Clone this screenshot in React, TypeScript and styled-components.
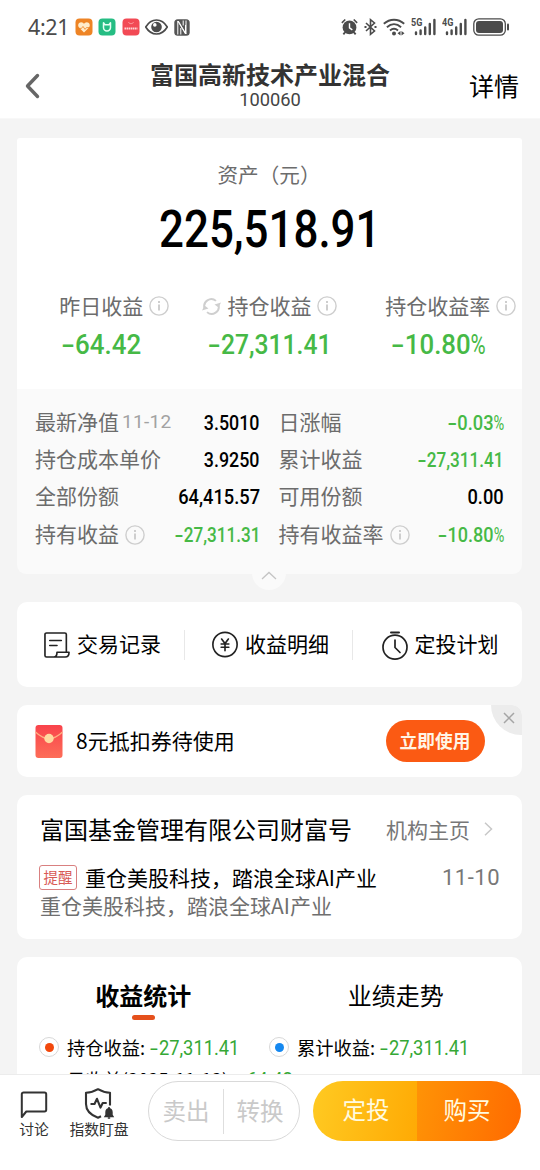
import React from "react";
import styled, { createGlobalStyle, css } from "styled-components";

const GlobalStyle = createGlobalStyle`
  * { box-sizing: border-box; }
  body {
    margin: 0;
    background: #f4f4f4;
    font-family: "Noto Sans CJK SC", sans-serif;
    color: #000;
  }
`;

const GREEN = "#46b946";

const Screen = styled.div`
  width: 540px;
  height: 1170px;
  display: flex;
  flex-direction: column;
  overflow: hidden;
  background: #f4f4f4;
  white-space: nowrap;
`;

/* ---------- status bar ---------- */

const StatusBar = styled.div`
  height: 54px;
  flex: none;
  display: flex;
  align-items: center;
  justify-content: space-between;
  padding: 0 30px 0 28px;
  background: #fff;
  color: #4b4b4b;
`;

const StatusGroup = styled.div<{ $gap: number }>`
  display: flex;
  align-items: center;
  gap: ${(p) => p.$gap}px;
`;

const Clock = styled.span`
  width: 41px;
  font: 400 21.5px/26px "Noto Sans", sans-serif;
  letter-spacing: -0.4px;
`;

/* ---------- header ---------- */

const Header = styled.header`
  height: 65px;
  flex: none;
  display: grid;
  grid-template-columns: 110px 1fr 110px;
  background: #fff;
  border-bottom: 1px solid #f8f8f8;
`;

const BackButton = styled.div`
  padding: 18px 0 0 25px;
`;

const HeaderTitle = styled.div`
  display: flex;
  flex-direction: column;
  align-items: center;
`;

const FundName = styled.h1`
  margin: 6px 0 0;
  font-size: 24px;
  line-height: 27px;
  font-weight: 700;
  color: #333;
`;

const FundCode = styled.div`
  margin-top: 3px;
  font: 400 18.3px/20px Roboto, sans-serif;
  color: #444;
`;

const DetailLink = styled.div`
  padding: 15px 21px 0 0;
  text-align: right;
  font-size: 25px;
  line-height: 33px;
`;

/* ---------- shared ---------- */

const Content = styled.main`
  flex: 1;
  min-height: 0;
  overflow: hidden;
  padding: 19px 18px 0 17px;
`;

const Card = styled.section<{ $h: number; $mt?: number }>`
  height: ${(p) => p.$h}px;
  margin-top: ${(p) => p.$mt ?? 18}px;
  background: #fff;
  border-radius: 10px;
`;

type Origin = "left" | "center" | "right";

const NumBox = styled.span<{ $size: number; $k: number; $o: Origin; $color: string; $w: number }>`
  display: inline-block;
  font-family: Roboto, sans-serif;
  font-size: ${(p) => p.$size}px;
  line-height: 1.2;
  font-weight: ${(p) => p.$w};
  color: ${(p) => p.$color};
  transform: scaleX(${(p) => p.$k});
  transform-origin: ${(p) => p.$o} center;
`;

const Minus = styled.span`
  display: inline-block;
  width: 0.54em;
  text-align: center;
  transform: scaleX(1.55);
`;

const Percent = styled.span`
  display: inline-block;
  width: 0.57em;
  font-weight: 400;
  transform: scaleX(0.8);
  transform-origin: left center;
`;

function Num({
  children,
  size,
  k = 0.87,
  origin = "center",
  color = "#000",
  weight = 500,
}: {
  children: string;
  size: number;
  k?: number;
  origin?: Origin;
  color?: string;
  weight?: number;
}) {
  const negative = children.startsWith("-");
  const percent = children.endsWith("%");
  const digits = children.replace(/^-|%$/g, "");
  return (
    <NumBox $size={size} $k={k} $o={origin} $color={color} $w={weight}>
      {negative && <Minus>-</Minus>}
      {digits}
      {percent && <Percent>%</Percent>}
    </NumBox>
  );
}

const InfoIcon = () => (
  <svg width="20" height="20" viewBox="0 0 20 20" fill="none" stroke="#cecece">
    <circle cx="10" cy="10" r="9.1" strokeWidth="1.4" />
    <path d="M10 8.4v6.2" strokeWidth="2" />
    <path d="M10 5v2" strokeWidth="2" />
  </svg>
);

/* ---------- asset card ---------- */

const AssetTop = styled.section`
  height: 251px;
  background: #fff;
  border-radius: 3px 3px 0 0;
  display: flex;
  flex-direction: column;
`;

const AssetLabel = styled.div`
  margin-top: 21px;
  padding-right: 1px;
  text-align: center;
  font-size: 20.6px;
  line-height: 30px;
  color: #6c6c6c;
`;

const AssetValue = styled.div`
  height: 62px;
  margin-top: 10px;
  text-align: center;
`;

const StatGrid = styled.div`
  display: grid;
  grid-template-columns: repeat(3, 1fr);
  margin-top: 29px;
`;

const StatLabel = styled.div`
  display: grid;
  grid-template-columns: 1fr auto 1fr;
  align-items: center;
  column-gap: 6px;
  font-size: 21px;
  line-height: 30px;
  color: #6c6c6c;
  svg { display: block; margin-top: 2px; }
`;

const StatLead = styled.span`
  display: flex;
  justify-content: flex-end;
`;

const StatValue = styled.div`
  margin-top: 8px;
  text-align: center;
`;

const DetailPanel = styled.section`
  height: 185px;
  padding: 14px 18px 0;
  background: #fafafa;
  border-radius: 0 0 9px 9px;
  display: grid;
  grid-template-columns: 225px 225px;
  grid-auto-rows: 37.4px;
  column-gap: 18.5px;
  position: relative;
`;

const DetailRow = styled.div`
  display: flex;
  align-items: center;
  justify-content: space-between;
  & > ${NumBox} { margin-top: 3px; }
`;

const DetailLabel = styled.div`
  display: flex;
  align-items: center;
  gap: 6px;
  padding-bottom: 2px;
  font-size: 21px;
  line-height: 30px;
  color: #6c6c6c;
  svg { margin-top: 4px; }
`;

const DetailDate = styled.span`
  margin-left: -3px;
  padding-top: 2px;
  font: 400 19px/28px Roboto, sans-serif;
  letter-spacing: 0.3px;
  color: #a2a2a2;
`;

const CollapseTab = styled.div`
  position: absolute;
  left: 235px;
  bottom: -16px;
  width: 34px;
  height: 34px;
  padding-top: 5px;
  border-radius: 50%;
  background: #fafafa;
  display: flex;
  align-items: center;
  justify-content: center;
`;

/* ---------- shortcuts ---------- */

const ShortcutGrid = styled.div`
  height: 100%;
  display: grid;
  grid-template-columns: 168px 168px 169px;
  align-items: center;
`;

const Shortcut = styled.div<{ $divided?: boolean }>`
  height: 30px;
  display: flex;
  align-items: center;
  justify-content: center;
  gap: 7px;
  padding-left: ${(p) => (p.$divided ? 4 : 5)}px;
  font-size: 21px;
  line-height: 30px;
  ${(p) => p.$divided && css`border-right: 1px solid #e8e8e8;`}
`;

const ShortcutText = styled.span`
  padding-bottom: 3px;
`;

/* ---------- coupon ---------- */

const CouponBody = styled.div`
  height: 100%;
  display: flex;
  align-items: center;
  padding-left: 18px;
  position: relative;
  overflow: hidden;
  border-radius: 10px;
`;

const CouponText = styled.div`
  margin-left: 13px;
  width: 309.5px;
  padding-bottom: 3px;
  font-size: 21px;
  line-height: 30px;
`;

const UseButton = styled.div`
  width: 99px;
  height: 42px;
  border-radius: 21px;
  background: #fb5a13;
  color: #fff5e6;
  font-size: 17.7px;
  font-weight: 700;
  line-height: 40px;
  text-align: center;
`;

const CloseCorner = styled.div`
  position: absolute;
  top: 0;
  right: 0;
  width: 31px;
  height: 30px;
  border-bottom-left-radius: 30px;
  background: #ececec;
  padding: 7px 0 0 12px;
  svg { display: block; }
`;

/* ---------- company account ---------- */

const Line = styled.div<{ $mt: number }>`
  margin-top: ${(p) => p.$mt}px;
  display: flex;
  align-items: center;
`;

const AccountTitle = styled.div`
  font-size: 24px;
  line-height: 34px;
  flex: 1;
`;

const AccountLink = styled.div`
  display: flex;
  align-items: center;
  gap: 14px;
  font-size: 21px;
  line-height: 30px;
  color: #777;
`;

const AccountCard = styled(Card)`
  padding: 0 22px 0 23px;
  overflow: hidden;
`;

const Tag = styled.span`
  width: 38px;
  height: 25px;
  margin: 0 8px 0 -1px;
  border: 1px solid #d98080;
  border-radius: 3px;
  font-size: 14.5px;
  line-height: 21px;
  text-align: center;
  color: #d85a55;
`;

const PostTitle = styled.div`
  flex: 1;
  font-size: 21px;
  line-height: 28px;
`;

const PostDate = styled.div`
  padding-top: 2px;
  font: 400 22px/26px Roboto, sans-serif;
  letter-spacing: 0.5px;
  color: #777;
`;

const PostSummary = styled.div`
  font-size: 21px;
  line-height: 28px;
  color: #6f6f6f;
`;

/* ---------- income statistics ---------- */

const StatsCard = styled(Card)`
  border-radius: 10px 10px 0 0;
`;

const Tabs = styled.div`
  display: grid;
  grid-template-columns: 1fr 1fr;
  padding-top: 21px;
`;

const Tab = styled.div<{ $active?: boolean }>`
  display: flex;
  flex-direction: column;
  align-items: center;
  font-size: 24px;
  line-height: 34px;
  font-weight: ${(p) => (p.$active ? 700 : 400)};
  &::after {
    content: "";
    width: 23px;
    height: 5px;
    margin-top: 3px;
    border-radius: 3px;
    background: ${(p) => (p.$active ? "#e5501c" : "transparent")};
  }
`;

const Legend = styled.div`
  display: grid;
  grid-template-columns: 230px 1fr;
  margin-top: 13.5px;
  padding-left: 22px;
`;

const LegendItem = styled.div`
  display: flex;
  align-items: center;
  font-size: 18.3px;
  line-height: 27px;
`;

const Radio = styled.span<{ $color: string }>`
  width: 20px;
  height: 20px;
  margin-right: 8px;
  border: 1px solid #d8d8d8;
  border-radius: 50%;
  display: flex;
  align-items: center;
  justify-content: center;
  &::before {
    content: "";
    width: 9px;
    height: 9px;
    border-radius: 50%;
    background: ${(p) => p.$color};
  }
`;

const LegendValue = styled.span`
  margin-left: 4px;
`;

const DayIncome = styled.div`
  display: flex;
  align-items: center;
  padding: 5px 0 0 50px;
  font-size: 18.3px;
  line-height: 27px;
`;

/* ---------- bottom bar ---------- */

const BottomBar = styled.footer`
  height: 96px;
  flex: none;
  display: flex;
  padding: 6px 18px 0 17px;
  background: #fff;
  border-top: 1px solid #ececec;
`;

const BarItem = styled.div<{ $w: number; $ml: number }>`
  width: ${(p) => p.$w}px;
  margin-left: ${(p) => p.$ml}px;
  padding-top: 7px;
  display: flex;
  flex-direction: column;
  align-items: center;
  font-size: 14.8px;
  line-height: 20px;
  color: #333;
  svg { display: block; flex: none; }
`;

const GhostPill = styled.div`
  width: 152px;
  height: 60px;
  margin-left: 19px;
  display: grid;
  grid-template-columns: 1fr 1fr;
  align-items: center;
  border: 1px solid #d9d9d9;
  border-radius: 30px;
`;

const GhostAction = styled.div<{ $first?: boolean }>`
  height: 45px;
  padding-right: ${(p) => (p.$first ? 0 : 3)}px;
  border-right: ${(p) => (p.$first ? "1px solid #dedede" : "0")};
  text-align: center;
  font-size: 23.5px;
  line-height: 42px;
  color: #c9c9c9;
`;

const SolidPill = styled.div`
  width: 208px;
  height: 60px;
  margin-left: 13px;
  display: grid;
  grid-template-columns: 1fr 1fr;
  border-radius: 30px;
  overflow: hidden;
`;

const SolidAction = styled.div<{ $from: string; $to: string; $shift: number }>`
  padding-left: ${(p) => Math.max(p.$shift, 0)}px;
  padding-right: ${(p) => Math.max(-p.$shift, 0)}px;
  background: linear-gradient(100deg, ${(p) => p.$from}, ${(p) => p.$to});
  color: #fffbe0;
  text-align: center;
  font-size: 23.5px;
  line-height: 57px;
`;

/* ---------- status icons ---------- */

const HeartApp = () => (
  <svg width="18" height="18" viewBox="0 0 18 18">
    <rect x=".5" y=".5" width="17" height="17" rx="4" fill="#ee8425" />
    <path d="M9 14.5 4 9.4C2.2 7.2 3.7 4.3 6.1 4.3 7.5 4.3 8.5 5 9 6c.5-1 1.5-1.7 2.9-1.7 2.4 0 3.9 2.9 2.1 5.1z" fill="#ffeccb" />
    <path d="M2 10.4h4.5l1.5-2 2 3 1.4-1.8H16" stroke="#ee8425" fill="none" strokeWidth=".8" />
  </svg>
);

const MiApp = () => (
  <svg width="18" height="18" viewBox="0 0 18 18">
    <rect x=".5" y=".5" width="17" height="17" rx="4" fill="#25bd83" />
    <path d="M5.5 4.8v4.7a3.5 3.5 0 0 0 7 0V4.8L11 6.7H7z" fill="none" stroke="#e4fff2" strokeWidth="1.5" strokeLinejoin="round" />
  </svg>
);

const RedApp = () => (
  <svg width="18" height="18" viewBox="0 0 18 18">
    <rect x=".5" y=".5" width="17" height="17" rx="4" fill="#f24a55" />
    <path d="M6.5 4c.5 2.2 4.5 2.2 5 0" fill="none" stroke="#ffb1b1" strokeWidth=".8" />
    <path d="M2.5 10.5h13" stroke="#ffd6d6" strokeWidth="1.8" strokeDasharray="1.6 .5" />
  </svg>
);

const EyeIcon = () => (
  <svg width="23" height="18" viewBox="0.5 0 23 18">
    <path d="M1.2 9C4 4.3 7.7 2 12 2s8 2.3 10.8 7C20 13.7 16.3 16 12 16S4 13.7 1.2 9z" fill="none" stroke="#4b4b4b" strokeWidth="1.7" />
    <circle cx="12" cy="9" r="5.3" fill="#4b4b4b" />
    <circle cx="10.3" cy="6.9" r="1.8" fill="#fff" />
  </svg>
);

const NfcIcon = () => (
  <svg width="16" height="17" viewBox="0 0 16 17">
    <rect x=".3" y=".3" width="15.4" height="16.4" rx="3.5" fill="#555" />
    <path d="M3.8 15.5V2l7.7 13V6M4.3 2l7.7 13V1.5M6.8 15.5V9M9.2 1.5v5" stroke="#fff" strokeWidth="1" fill="none" />
  </svg>
);

const AlarmIcon = () => (
  <svg width="17" height="18" viewBox="0 0 18 18" fill="none" stroke="#4b4b4b">
    <circle cx="9" cy="9.5" r="7.3" fill="#4b4b4b" stroke="none" />
    <path d="M9 5v5l3 2" stroke="#fff" strokeWidth="1.5" />
    <path d="M.9 4.6 4.5 1M17.1 4.6 13.5 1" strokeWidth="1.7" />
    <path d="m4.2 14.8-1.7 2M13.8 14.8l1.7 2" strokeWidth="2" />
  </svg>
);

const BluetoothIcon = () => (
  <svg width="13" height="18" viewBox="0 0 13 18" fill="none" stroke="#4b4b4b" strokeWidth="1.6">
    <path d="m2 5 8.5 8L6.5 16.300V1.700l4 3.300L2 13" />
    <path d="M.5 9h2M10.500 9h2" strokeWidth="2" />
  </svg>
);

const WifiIcon = () => (
  <svg width="22" height="18" viewBox="0 0 22 18" fill="none" stroke="#4b4b4b" strokeWidth="1.9">
    <path d="M.8 5.8c6-5.4 14.4-5.4 20.4 0M3.9 9.2c4.4-3.9 9.8-3.9 14.2 0M7 12.5c2.5-2.1 5.5-2.1 8 0" />
    <circle cx="11" cy="15.5" r="2" fill="#4b4b4b" stroke="none" />
    <path d="m17.5 13-3 2.3 3 2.3zM18.5 13l3 2.3-3 2.3z" fill="#4b4b4b" stroke="none" />
  </svg>
);

const SignalBox = styled.div`
  width: 25px;
  height: 18px;
  position: relative;
  svg { display: block; }
`;

const NetworkType = styled.span`
  position: absolute;
  left: 0;
  top: -1px;
  font: 700 11px/12px Roboto, sans-serif;
  transform: scaleX(0.82);
  transform-origin: left center;
`;

const Signal = ({ label }: { label: string }) => (
  <SignalBox>
    <NetworkType>{label}</NetworkType>
    <svg width="25" height="18" viewBox="0 0 25 18" stroke="#4b4b4b" strokeWidth="2.4" strokeLinecap="round">
      <path d="M5 14.5v1.5M9.6 12.5v3.5M14.2 9.5v6.5M18.8 6v10M23.4 2v14" />
    </svg>
  </SignalBox>
);

const BatteryIcon = () => (
  <svg width="37" height="18" viewBox="0 0 37 18">
    <rect x=".8" y=".8" width="31.5" height="16.4" rx="5" fill="none" stroke="#4b4b4b" strokeWidth="1.3" />
    <rect x="3" y="3" width="27" height="12" rx="3" fill="#4b4b4b" />
    <path d="M35 6.5v5" stroke="#4b4b4b" strokeWidth="2" strokeLinecap="round" />
  </svg>
);

/* ---------- page icons ---------- */

const RefreshIcon = () => (
  <svg width="19" height="19" viewBox="0 0 19 19" fill="none" stroke="#cfcfcf" strokeWidth="1.9">
    <path d="M2.6 11.5A7.1 7.1 0 0 1 14 3.9M16.4 7.5A7.1 7.1 0 0 1 5 15.1" />
    <path d="m12.5 7.5 6.5-2-2.5 5zM6.5 11.5l-6.5 2 2.5-5z" fill="#cfcfcf" stroke="none" />
  </svg>
);

const RecordIcon = () => (
  <svg width="26" height="26" viewBox="0 0 27 27" fill="none" stroke="#222" strokeWidth="1.7" strokeLinejoin="round" strokeLinecap="round">
    <path d="M23.2 20V2.6a1.6 1.6 0 0 0-1.6-1.6H2.6A1.6 1.6 0 0 0 1 2.6v21.8A1.6 1.6 0 0 0 2.6 26H22c2.7 0 4-2 4-5H13.5c0 3-1.5 5-3.5 5" />
    <path d="M6 8.8h12M6 14h7.500" />
  </svg>
);

const YuanIcon = () => (
  <svg width="26" height="27" viewBox="0 0 27 27" fill="none" stroke="#222" strokeWidth="1.7" strokeLinecap="round">
    <circle cx="13.5" cy="13.5" r="12.6" />
    <path d="m10 7.8 3.5 4.7L17 7.8M13.5 12.5V20M9.5 13h8M9.5 16.3h8" />
  </svg>
);

const TimerIcon = () => (
  <svg width="26" height="32" viewBox="0 0 26 32" fill="none" stroke="#222" strokeWidth="1.7" strokeLinecap="round">
    <circle cx="13" cy="18.2" r="12" />
    <path d="M9 3.5h8" strokeWidth="2" />
    <path d="M13 11v7.500l5 5" />
  </svg>
);

const EnvelopeIcon = () => (
  <svg width="28" height="33" viewBox="0 0 28 33">
    <defs>
      <linearGradient id="envelope" x1="0" y1="0" x2="0" y2="1">
        <stop offset="0" stopColor="#f9434b" />
        <stop offset="1" stopColor="#fd6d58" />
      </linearGradient>
    </defs>
    <rect x=".5" width="27" height="33" rx="3" fill="url(#envelope)" />
    <path d="M.5 7Q14 20 27.5 7" fill="none" stroke="#ffb183" strokeWidth="1.2" />
    <circle cx="14" cy="13.5" r="4.7" fill="#ffd9a0" />
  </svg>
);

const ChatIcon = () => (
  <svg width="28" height="31" viewBox="0 0 28 31" fill="none" stroke="#333" strokeWidth="2" strokeLinejoin="round">
    <path d="M1.8 29V6.2a1.7 1.7 0 0 1 1.7-1.7h21a1.7 1.7 0 0 1 1.7 1.7v15.6a1.7 1.7 0 0 1-1.7 1.7H6.3z" />
  </svg>
);

const ShieldIcon = () => (
  <svg width="31" height="31" viewBox="0 0 31 31" fill="none" stroke="#333" strokeWidth="2.1" strokeLinejoin="round">
    <path d="M26 17.5V4.7C21.5 4.7 17.5 3.3 14 1.2 10.5 3.3 6.5 4.7 2 4.7V16c0 6.5 4.5 11 12 13.7l3-1.4" />
    <path d="M6.5 16h4l2.5-5.2 3.5 8.8 2.2-4.600h4" />
    <path d="M19.8 29.2h10.4l-1.500-2.400V24c0-5.500-7.400-5.500-7.400 0v2.800z" fill="#333" stroke="none" />
    <path d="M23.8 30h2.4M25 19v3" strokeWidth="1.6" />
  </svg>
);

/* ---------- data ---------- */

type Detail = { label: string; date?: string; info?: boolean; value: string; k?: number };

const details: Detail[] = [
  { label: "最新净值", date: "11-12", value: "3.5010", k: 0.85 },
  { label: "日涨幅", value: "-0.03%" },
  { label: "持仓成本单价", value: "3.9250", k: 0.85 },
  { label: "累计收益", value: "-27,311.41", k: 0.815 },
  { label: "全部份额", value: "64,415.57" },
  { label: "可用份额", value: "0.00" },
  { label: "持有收益", info: true, value: "-27,311.31", k: 0.815 },
  { label: "持有收益率", info: true, value: "-10.80%", k: 0.86 },
];

const stats = [
  { label: "昨日收益", value: "-64.42", k: 0.91 },
  { label: "持仓收益", value: "-27,311.41", k: 0.865, refresh: true },
  { label: "持仓收益率", value: "-10.80%", k: 0.905 },
];

export default function App() {
  return (
    <Screen>
      <GlobalStyle />
      <StatusBar>
        <StatusGroup $gap={5.5}>
          <Clock>4:21</Clock>
          <HeartApp />
          <MiApp />
          <RedApp />
          <EyeIcon />
          <NfcIcon />
        </StatusGroup>
        <StatusGroup $gap={6}>
          <AlarmIcon />
          <BluetoothIcon />
          <WifiIcon />
          <Signal label="5G" />
          <Signal label="4G" />
          <BatteryIcon />
        </StatusGroup>
      </StatusBar>

      <Header>
        <BackButton>
          <svg width="16" height="28" viewBox="0 0 16 28" fill="none" stroke="#666" strokeWidth="3.4" strokeLinecap="round" strokeLinejoin="round">
            <path d="M12.5 3.5 2.5 14l10 10.5" />
          </svg>
        </BackButton>
        <HeaderTitle>
          <FundName>富国高新技术产业混合</FundName>
          <FundCode>100060</FundCode>
        </HeaderTitle>
        <DetailLink>详情</DetailLink>
      </Header>

      <Content>
        <AssetTop>
          <AssetLabel>资产（元）</AssetLabel>
          <AssetValue>
            <Num size={51} k={0.86}>225,518.91</Num>
          </AssetValue>
          <StatGrid>
            {stats.map((s) => (
              <div key={s.label}>
                <StatLabel>
                  <StatLead>{s.refresh && <RefreshIcon />}</StatLead>
                  {s.label}
                  <InfoIcon />
                </StatLabel>
                <StatValue>
                  <Num size={28.5} k={s.k} color={GREEN}>{s.value}</Num>
                </StatValue>
              </div>
            ))}
          </StatGrid>
        </AssetTop>
        <DetailPanel>
          {details.map((d) => (
            <DetailRow key={d.label}>
              <DetailLabel>
                {d.label}
                {d.date && <DetailDate>{d.date}</DetailDate>}
                {d.info && <InfoIcon />}
              </DetailLabel>
              <Num size={21} k={d.k} origin="right" color={d.value.startsWith("-") ? GREEN : "#000"}>
                {d.value}
              </Num>
            </DetailRow>
          ))}
          <CollapseTab>
            <svg width="16" height="9" viewBox="0 0 16 9" fill="none" stroke="#c4c4c4" strokeWidth="1.3">
              <path d="m1 8 7-6.500L15 8" />
            </svg>
          </CollapseTab>
        </DetailPanel>

        <Card $h={85} $mt={28}>
          <ShortcutGrid>
            <Shortcut $divided><RecordIcon /><ShortcutText>交易记录</ShortcutText></Shortcut>
            <Shortcut $divided><YuanIcon /><ShortcutText>收益明细</ShortcutText></Shortcut>
            <Shortcut><TimerIcon /><ShortcutText>定投计划</ShortcutText></Shortcut>
          </ShortcutGrid>
        </Card>

        <Card $h={72}>
          <CouponBody>
            <EnvelopeIcon />
            <CouponText>8元抵扣券待使用</CouponText>
            <UseButton>立即使用</UseButton>
            <CloseCorner>
              <svg width="12" height="12" viewBox="0 0 12 12" stroke="#a5a5a5" strokeWidth="1.5">
                <path d="m1 1 10 10M11 1 1 11" />
              </svg>
            </CloseCorner>
          </CouponBody>
        </Card>

        <AccountCard $h={144}>
          <Line $mt={17}>
            <AccountTitle>富国基金管理有限公司财富号</AccountTitle>
            <AccountLink>
              机构主页
              <svg width="16" height="14" viewBox="0 0 16 14" fill="none" stroke="#c8c8c8" strokeWidth="1.5">
                <path d="m1 .8 6.5 6.2L1 13.2" />
              </svg>
            </AccountLink>
          </Line>
          <Line $mt={17}>
            <Tag>提醒</Tag>
            <PostTitle>重仓美股科技，踏浪全球AI产业</PostTitle>
            <PostDate>11-10</PostDate>
          </Line>
          <PostSummary>重仓美股科技，踏浪全球AI产业</PostSummary>
        </AccountCard>

        <StatsCard $h={220}>
          <Tabs>
            <Tab $active>收益统计</Tab>
            <Tab>业绩走势</Tab>
          </Tabs>
          <Legend>
            <LegendItem>
              <Radio $color="#f2480c" />
              持仓收益:
              <LegendValue><Num size={19.3} k={0.95} origin="left" weight={400} color="#35a835">-27,311.41</Num></LegendValue>
            </LegendItem>
            <LegendItem>
              <Radio $color="#1588f0" />
              累计收益:
              <LegendValue><Num size={19.3} k={0.95} origin="left" weight={400} color="#35a835">-27,311.41</Num></LegendValue>
            </LegendItem>
          </Legend>
          <DayIncome>
            日收益(2025-11-12):
            <LegendValue><Num size={19.3} k={0.95} origin="left" weight={400} color="#35a835">-64.42</Num></LegendValue>
          </DayIncome>
        </StatsCard>
      </Content>

      <BottomBar>
        <BarItem $w={34} $ml={0}><ChatIcon />讨论</BarItem>
        <BarItem $w={60} $ml={18}><ShieldIcon />指数盯盘</BarItem>
        <GhostPill>
          <GhostAction $first>卖出</GhostAction>
          <GhostAction>转换</GhostAction>
        </GhostPill>
        <SolidPill>
          <SolidAction $from="#ffca22" $to="#ffaa04" $shift={2}>定投</SolidAction>
          <SolidAction $from="#ff9306" $to="#ff6a00" $shift={-4}>购买</SolidAction>
        </SolidPill>
      </BottomBar>
    </Screen>
  );
}
